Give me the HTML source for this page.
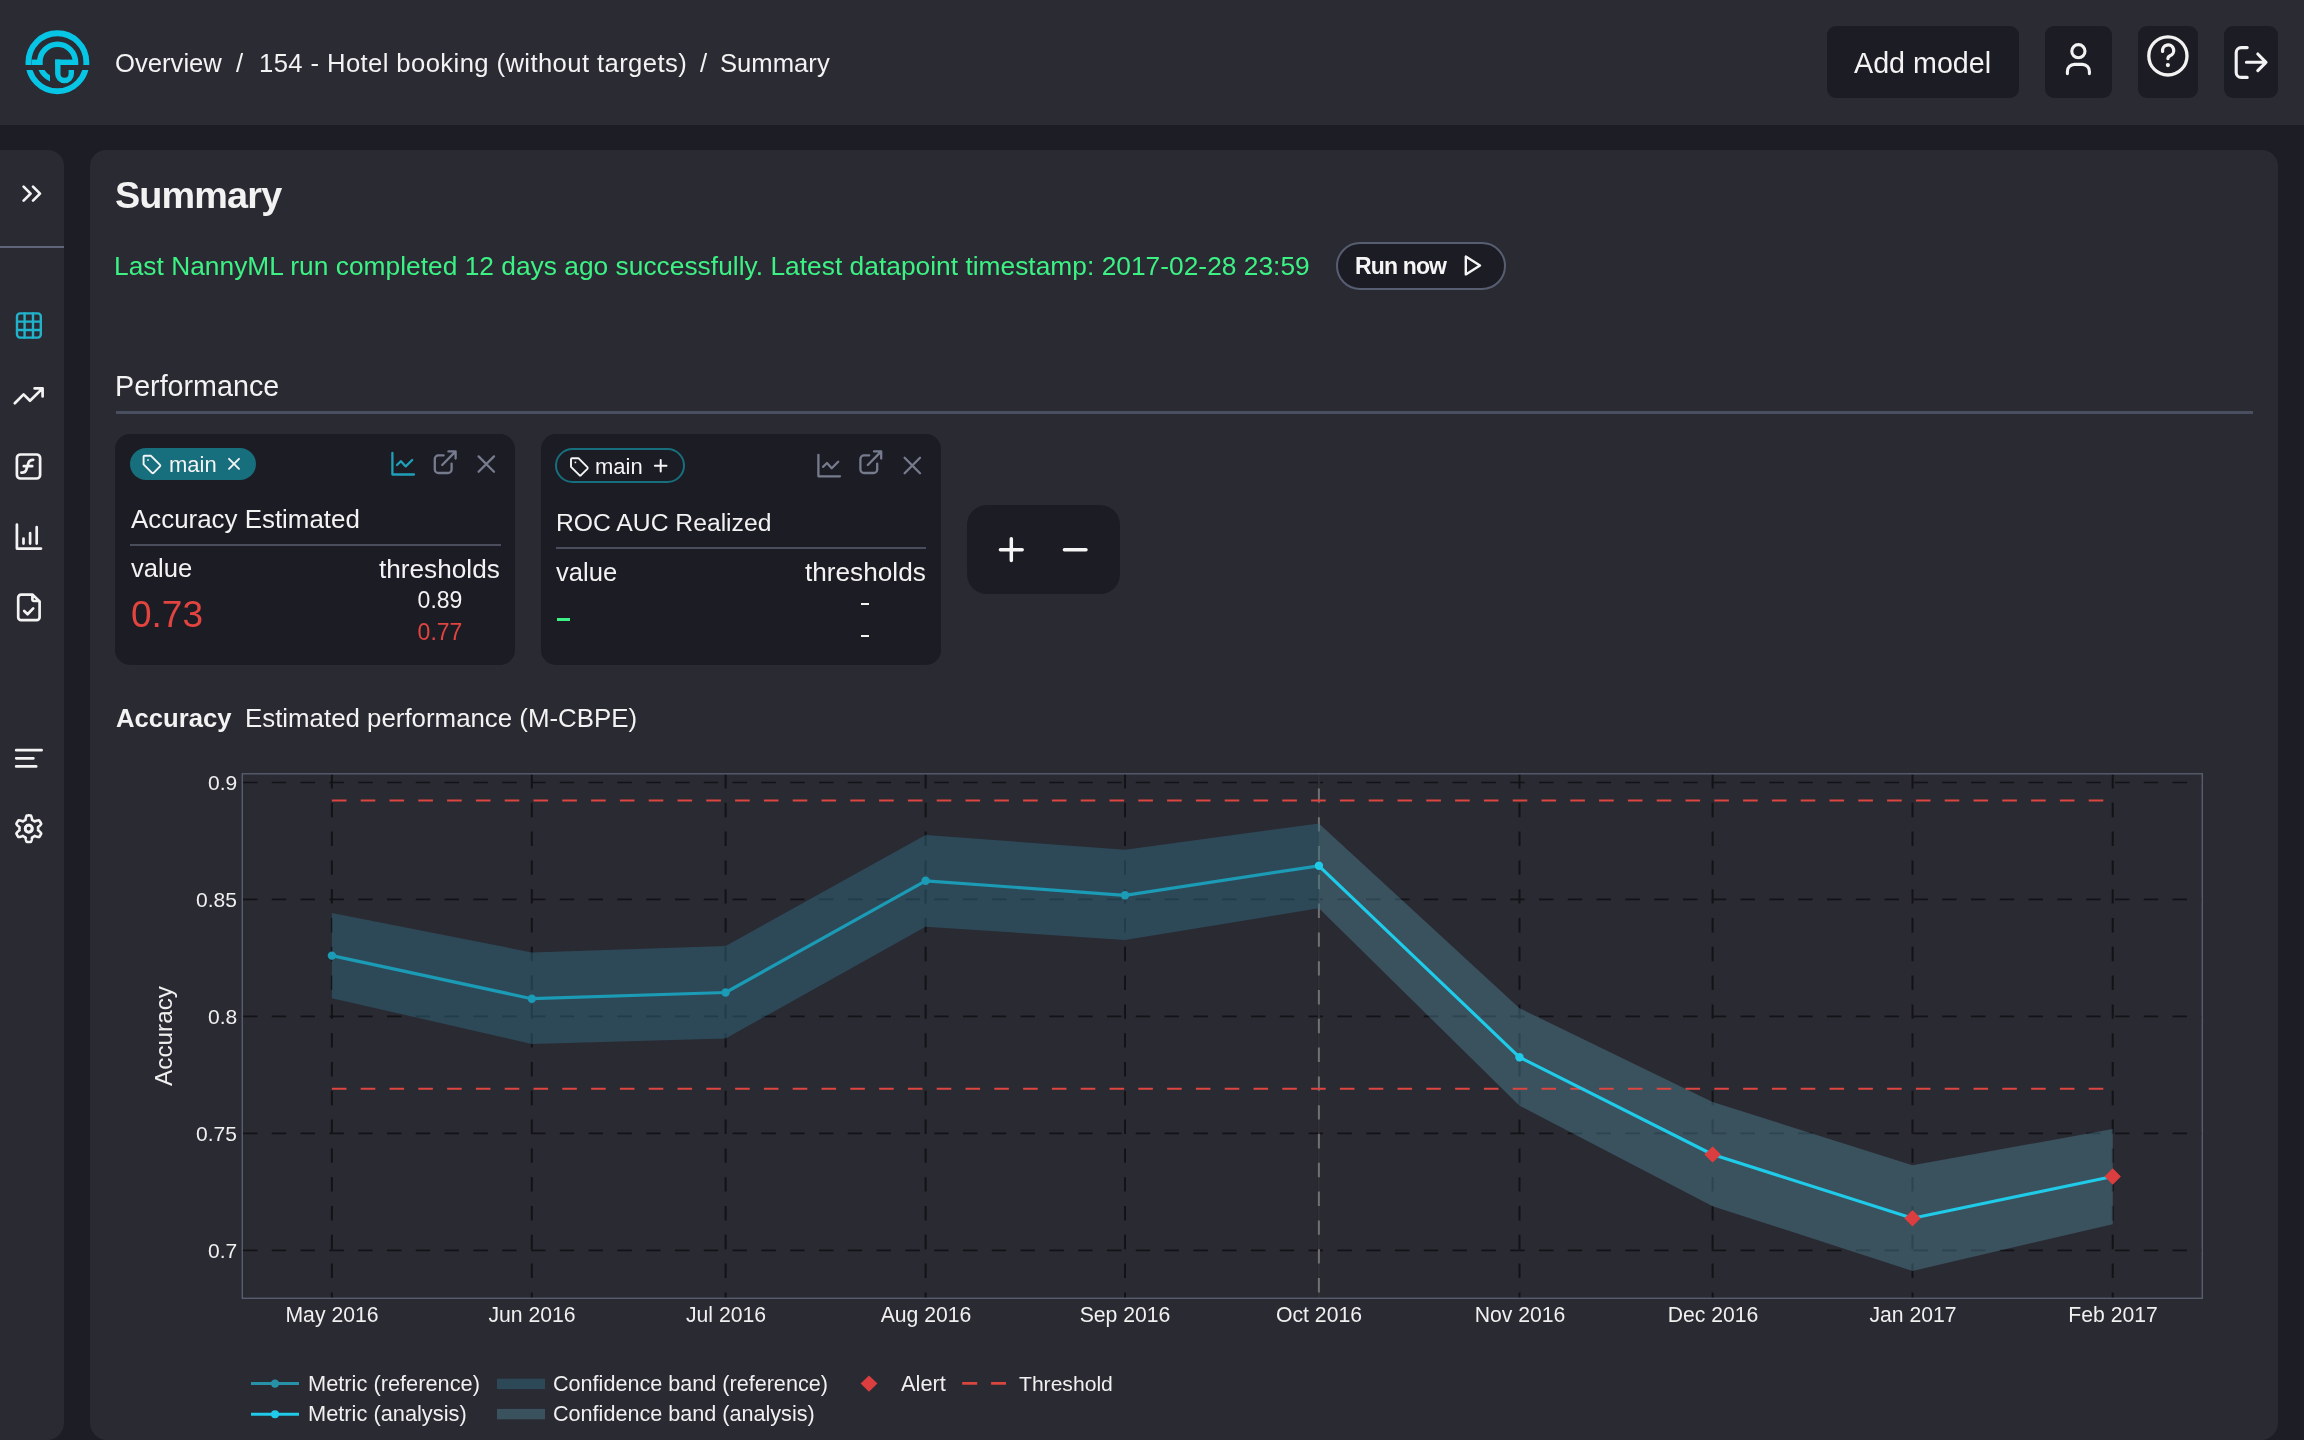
<!DOCTYPE html>
<html><head><meta charset="utf-8"><style>
html,body{margin:0;padding:0;}
body{width:2304px;height:1440px;overflow:hidden;position:relative;background:#1d1d26;font-family:"Liberation Sans", sans-serif;}
.t{position:absolute;white-space:nowrap;line-height:1;will-change:transform;}
svg{overflow:visible;}
</style></head><body>
<div style="position:absolute;left:0px;top:0px;width:2304px;height:125px;background:#2b2b34;border-radius:0;"></div>
<div style="position:absolute;left:0px;top:150px;width:64px;height:1290px;background:#2a2a33;border-radius:0 16px 17px 0;"></div>
<div style="position:absolute;left:90px;top:150px;width:2188px;height:1290px;background:#2a2a33;border-radius:16px 16px 17px 17px;"></div>
<svg style="position:absolute;left:0;top:0" width="130" height="125" viewBox="0 0 130 125">
<defs><clipPath id="lt"><rect x="0" y="0" width="130" height="65"/></clipPath><clipPath id="lb"><rect x="0" y="70" width="130" height="60"/></clipPath><clipPath id="ld"><rect x="30" y="70" width="20.1" height="25"/></clipPath></defs>
<g fill="none" stroke="#07c5e5" stroke-width="5.9">
<circle cx="57.4" cy="62.25" r="28.95" clip-path="url(#lt)"/>
<circle cx="57.4" cy="62.25" r="28.95" clip-path="url(#lb)"/>
<path d="M39.75 65 V62.1 A17.85 17.85 0 0 1 75.45 62.1 V65" stroke-width="5.5" />
<circle cx="57.6" cy="62.2" r="17.85" stroke-width="5.5" clip-path="url(#ld)"/>
</g>
<g fill="#07c5e5">
<rect x="31.6" y="59.6" width="10.8" height="5.4"/>
<rect x="55.1" y="59.6" width="23" height="5.4"/>
<path d="M55.1 59.6 H60.5 V73.7 A4.05 4.05 0 0 0 68.6 73.7 V70 H74 V73.7 A9.45 9.45 0 0 1 55.1 73.7 Z"/>

</g>
</svg>
<div class="t" style="left:115.20px;top:51.28px;font-size:25.65px;color:#f3f3f3;font-weight:400;">Overview</div>
<div class="t" style="left:235.50px;top:51.28px;font-size:25.65px;color:#f3f3f3;font-weight:400;">/</div>
<div class="t" style="left:258.60px;top:51.28px;font-size:25.65px;color:#f3f3f3;font-weight:400;letter-spacing:0.4px;">154 - Hotel booking (without targets)</div>
<div class="t" style="left:699.50px;top:51.28px;font-size:25.65px;color:#f3f3f3;font-weight:400;">/</div>
<div class="t" style="left:719.50px;top:51.28px;font-size:25.65px;color:#f3f3f3;font-weight:400;">Summary</div>
<div style="position:absolute;left:1827px;top:26px;width:192px;height:72px;background:#1c1c24;border-radius:9px;"></div>
<div class="t" style="left:1854.40px;top:48.60px;font-size:28.7px;color:#f3f3f3;font-weight:400;">Add model</div>
<div style="position:absolute;left:2045px;top:26px;width:67px;height:72px;background:#1c1c24;border-radius:9px;"></div>
<div style="position:absolute;left:2138px;top:26px;width:60px;height:72px;background:#1c1c24;border-radius:9px;"></div>
<div style="position:absolute;left:2224px;top:26px;width:54px;height:72px;background:#1c1c24;border-radius:9px;"></div>
<svg style="position:absolute;left:2030px;top:20px" width="260" height="90" viewBox="2030 20 260 90" fill="none" stroke="#f3f3f3" stroke-width="3.1" stroke-linecap="round" stroke-linejoin="round">
<circle cx="2078.4" cy="51.2" r="6.6"/>
<path d="M2067.4 73.6 V71.4 A7 7 0 0 1 2074.4 64.4 H2082.4 A7 7 0 0 1 2089.4 71.4 V73.6"/>
<circle cx="2167.9" cy="55.9" r="19.1" stroke-width="3.3"/>
<path d="M2162.6 51.4 A5.6 5.6 0 1 1 2170 55.8 Q2167.9 56.9 2167.9 58.6" stroke-width="3.3"/>
<circle cx="2167.9" cy="65.1" r="2.1" fill="#f3f3f3" stroke="none"/>
<path d="M2247.2 47.6 H2241.2 A5 5 0 0 0 2236.2 52.6 V72.4 A5 5 0 0 0 2241.2 77.4 H2247.2"/>
<path d="M2246.4 62.3 H2266 M2257.8 54 L2266 62.3 L2257.8 70.6"/>
</svg>
<div style="position:absolute;left:0px;top:246px;width:64px;height:2px;background:#5f6478;border-radius:0;"></div>
<svg style="position:absolute;left:0;top:150px" width="64" height="720" viewBox="0 150 64 720" fill="none" stroke="#f3f3f3" stroke-width="2.7" stroke-linecap="round" stroke-linejoin="round">
<path d="M23.6 186.6 L30.6 193.6 L23.6 200.6 M33 186.6 L40 193.6 L33 200.6"/>
<g stroke="#22b3cc">
<rect x="17" y="313.4" width="23.8" height="24.2" rx="3" stroke-width="2.4"/>
<path d="M17 321.6 H40.8 M17 330 H40.8 M24.6 313.4 V337.6 M33 313.4 V337.6" stroke-width="2.4"/>
</g>
<path d="M14.8 403.2 L23.6 394.4 L30 400.8 L42.6 388.4 M34.6 388.4 H42.6 V396.4"/>
<rect x="16.9" y="454.5" width="23.2" height="24" rx="3.6"/>
<path d="M21.4 472.6 Q25 473 26.2 470 L28.6 462.4 Q29.6 459.6 33.2 459.8 M23.8 466.2 H32.2"/>
<path d="M16.9 524.6 V548.6 H41 M23.5 543.6 V538.6 M30.1 543.6 V533 M36.7 543.6 V527.2"/>
<path d="M32.4 594.6 V599.6 A1.4 1.4 0 0 0 33.8 601 H39.2 M32.6 594.6 H21.2 A3 3 0 0 0 18.2 597.6 V617.2 A3 3 0 0 0 21.2 620.2 H36.6 A3 3 0 0 0 39.6 617.2 V601.4 Z M24.2 611 L27.6 614.2 L33.2 608.4"/>
<path d="M16.2 750.2 H41.6 M16.2 758.3 H33.4 M16.2 766.4 H36.2"/>
<g transform="translate(28.6 828.6)">
<circle r="3.4"/>
<path d="M-2.6 -12.4 A2.9 2.9 0 0 1 2.6 -12.4 L3.2 -9.6 Q4.6 -9 5.6 -8.2 L8.4 -9.2 A2.9 2.9 0 0 1 11 -4.6 L8.8 -2.8 Q9 -1.4 8.8 0 L8.8 0" opacity="0"/>
</g>
</svg>
<svg style="position:absolute;left:0;top:800px" width="64" height="60" viewBox="0 800 64 60" fill="none" stroke="#f3f3f3" stroke-width="2.6" stroke-linejoin="round">
<path d="M38.10 828.70 L38.10 828.86 L38.09 829.02 L38.09 829.19 L38.08 829.35 L38.06 829.51 L38.05 829.67 L38.03 829.83 L38.01 829.99 L37.99 830.16 L38.25 830.37 L38.53 830.59 L38.83 830.83 L39.12 831.08 L39.42 831.35 L39.71 831.62 L40.00 831.91 L40.28 832.21 L40.55 832.52 L40.79 832.83 L41.02 833.15 L41.22 833.47 L41.13 833.68 L41.04 833.90 L40.95 834.11 L40.85 834.32 L40.75 834.53 L40.65 834.74 L40.54 834.94 L40.43 835.15 L40.32 835.35 L40.20 835.55 L40.08 835.75 L39.95 835.94 L39.83 836.14 L39.69 836.33 L39.56 836.52 L39.42 836.70 L39.28 836.89 L39.13 837.07 L38.76 837.06 L38.37 837.02 L37.98 836.96 L37.58 836.89 L37.18 836.80 L36.79 836.69 L36.40 836.57 L36.02 836.45 L35.66 836.32 L35.31 836.18 L34.97 836.05 L34.65 835.93 L34.53 836.03 L34.40 836.13 L34.27 836.22 L34.13 836.32 L34.00 836.41 L33.87 836.50 L33.73 836.59 L33.59 836.67 L33.45 836.75 L33.31 836.83 L33.17 836.91 L33.02 836.99 L32.88 837.06 L32.73 837.13 L32.58 837.20 L32.43 837.26 L32.28 837.32 L32.13 837.38 L32.08 837.72 L32.03 838.08 L31.97 838.45 L31.90 838.83 L31.82 839.22 L31.72 839.61 L31.62 840.01 L31.50 840.40 L31.37 840.78 L31.22 841.15 L31.06 841.50 L30.88 841.83 L30.65 841.87 L30.42 841.90 L30.19 841.93 L29.96 841.95 L29.73 841.97 L29.50 841.98 L29.26 841.99 L29.03 842.00 L28.80 842.00 L28.57 842.00 L28.34 841.99 L28.10 841.98 L27.87 841.97 L27.64 841.95 L27.41 841.93 L27.18 841.90 L26.95 841.87 L26.72 841.83 L26.54 841.50 L26.38 841.15 L26.23 840.78 L26.10 840.40 L25.98 840.01 L25.88 839.61 L25.78 839.22 L25.70 838.83 L25.63 838.45 L25.57 838.08 L25.52 837.72 L25.47 837.38 L25.32 837.32 L25.17 837.26 L25.02 837.20 L24.87 837.13 L24.72 837.06 L24.58 836.99 L24.43 836.91 L24.29 836.83 L24.15 836.75 L24.01 836.67 L23.87 836.59 L23.73 836.50 L23.60 836.41 L23.47 836.32 L23.33 836.22 L23.20 836.13 L23.07 836.03 L22.95 835.93 L22.63 836.05 L22.29 836.18 L21.94 836.32 L21.58 836.45 L21.20 836.57 L20.81 836.69 L20.42 836.80 L20.02 836.89 L19.62 836.96 L19.23 837.02 L18.84 837.06 L18.47 837.07 L18.32 836.89 L18.18 836.70 L18.04 836.52 L17.91 836.33 L17.77 836.14 L17.65 835.94 L17.52 835.75 L17.40 835.55 L17.28 835.35 L17.17 835.15 L17.06 834.94 L16.95 834.74 L16.85 834.53 L16.75 834.32 L16.65 834.11 L16.56 833.90 L16.47 833.68 L16.38 833.47 L16.58 833.15 L16.81 832.83 L17.05 832.52 L17.32 832.21 L17.60 831.91 L17.89 831.62 L18.18 831.35 L18.48 831.08 L18.77 830.83 L19.07 830.59 L19.35 830.37 L19.61 830.16 L19.59 829.99 L19.57 829.83 L19.55 829.67 L19.54 829.51 L19.52 829.35 L19.51 829.19 L19.51 829.02 L19.50 828.86 L19.50 828.70 L19.50 828.54 L19.51 828.38 L19.51 828.21 L19.52 828.05 L19.54 827.89 L19.55 827.73 L19.57 827.57 L19.59 827.41 L19.61 827.24 L19.35 827.03 L19.07 826.81 L18.77 826.57 L18.48 826.32 L18.18 826.05 L17.89 825.78 L17.60 825.49 L17.32 825.19 L17.05 824.88 L16.81 824.57 L16.58 824.25 L16.38 823.93 L16.47 823.72 L16.56 823.50 L16.65 823.29 L16.75 823.08 L16.85 822.87 L16.95 822.66 L17.06 822.46 L17.17 822.25 L17.28 822.05 L17.40 821.85 L17.52 821.65 L17.65 821.46 L17.77 821.26 L17.91 821.07 L18.04 820.88 L18.18 820.70 L18.32 820.51 L18.47 820.33 L18.84 820.34 L19.23 820.38 L19.62 820.44 L20.02 820.51 L20.42 820.60 L20.81 820.71 L21.20 820.83 L21.58 820.95 L21.94 821.08 L22.29 821.22 L22.63 821.35 L22.95 821.47 L23.07 821.37 L23.20 821.27 L23.33 821.18 L23.47 821.08 L23.60 820.99 L23.73 820.90 L23.87 820.81 L24.01 820.73 L24.15 820.65 L24.29 820.57 L24.43 820.49 L24.58 820.41 L24.72 820.34 L24.87 820.27 L25.02 820.20 L25.17 820.14 L25.32 820.08 L25.47 820.02 L25.52 819.68 L25.57 819.32 L25.63 818.95 L25.70 818.57 L25.78 818.18 L25.88 817.79 L25.98 817.39 L26.10 817.00 L26.23 816.62 L26.38 816.25 L26.54 815.90 L26.72 815.57 L26.95 815.53 L27.18 815.50 L27.41 815.47 L27.64 815.45 L27.87 815.43 L28.10 815.42 L28.34 815.41 L28.57 815.40 L28.80 815.40 L29.03 815.40 L29.26 815.41 L29.50 815.42 L29.73 815.43 L29.96 815.45 L30.19 815.47 L30.42 815.50 L30.65 815.53 L30.88 815.57 L31.06 815.90 L31.22 816.25 L31.37 816.62 L31.50 817.00 L31.62 817.39 L31.72 817.79 L31.82 818.18 L31.90 818.57 L31.97 818.95 L32.03 819.32 L32.08 819.68 L32.13 820.02 L32.28 820.08 L32.43 820.14 L32.58 820.20 L32.73 820.27 L32.88 820.34 L33.02 820.41 L33.17 820.49 L33.31 820.57 L33.45 820.65 L33.59 820.73 L33.73 820.81 L33.87 820.90 L34.00 820.99 L34.13 821.08 L34.27 821.18 L34.40 821.27 L34.53 821.37 L34.65 821.47 L34.97 821.35 L35.31 821.22 L35.66 821.08 L36.02 820.95 L36.40 820.83 L36.79 820.71 L37.18 820.60 L37.58 820.51 L37.98 820.44 L38.37 820.38 L38.76 820.34 L39.13 820.33 L39.28 820.51 L39.42 820.70 L39.56 820.88 L39.69 821.07 L39.83 821.26 L39.95 821.46 L40.08 821.65 L40.20 821.85 L40.32 822.05 L40.43 822.25 L40.54 822.46 L40.65 822.66 L40.75 822.87 L40.85 823.08 L40.95 823.29 L41.04 823.50 L41.13 823.72 L41.22 823.93 L41.02 824.25 L40.79 824.57 L40.55 824.88 L40.28 825.19 L40.00 825.49 L39.71 825.78 L39.42 826.05 L39.12 826.32 L38.83 826.57 L38.53 826.81 L38.25 827.03 L37.99 827.24 L38.01 827.41 L38.03 827.57 L38.05 827.73 L38.06 827.89 L38.08 828.05 L38.09 828.21 L38.09 828.38 L38.10 828.54 Z"/>
<circle cx="28.8" cy="828.7" r="3.7"/>
</svg>
<div class="t" style="left:115.00px;top:177.19px;font-size:37.8px;color:#f2f2f2;font-weight:700;letter-spacing:-0.85px;">Summary</div>
<div class="t" style="left:114.40px;top:252.53px;font-size:26.3px;color:#3cf284;font-weight:400;letter-spacing:0.03px;">Last NannyML run completed 12 days ago successfully. Latest datapoint timestamp: 2017-02-28 23:59</div>
<div style="position:absolute;left:1336px;top:242px;width:170px;height:48px;background:#1c1c24;border-radius:24px;border:2px solid #575e71;box-sizing:border-box;"></div>
<div class="t" style="left:1355.00px;top:255.03px;font-size:23.0px;color:#f5f5f5;font-weight:700;letter-spacing:-0.85px;">Run now</div>
<svg style="position:absolute;left:1455px;top:248px" width="40" height="36" viewBox="1455 248 40 36" fill="none" stroke="#f5f5f5" stroke-width="2.4" stroke-linejoin="round">
<path d="M1465.8 256.6 V274.4 L1480 265.5 Z"/></svg>
<div class="t" style="left:115.00px;top:371.60px;font-size:28.7px;color:#f3f3f3;font-weight:400;">Performance</div>
<div style="position:absolute;left:116px;top:411px;width:2137px;height:3px;background:#4a4f5f;border-radius:0;"></div>
<div style="position:absolute;left:115px;top:434px;width:400px;height:231px;background:#1c1c24;border-radius:15px;"></div>
<div style="position:absolute;left:541px;top:434px;width:400px;height:231px;background:#1c1c24;border-radius:15px;"></div>
<div style="position:absolute;left:967px;top:505px;width:153px;height:89px;background:#1c1c24;border-radius:20px;"></div>
<div style="position:absolute;left:129.6px;top:448px;width:126.0px;height:32px;background:#176f7d;border-radius:16px;"></div>
<div class="t" style="left:168.80px;top:453.67px;font-size:22.0px;color:#f5f5f5;font-weight:400;">main</div>
<div class="t" style="left:130.60px;top:507.27px;font-size:25.9px;color:#f3f3f3;font-weight:400;">Accuracy Estimated</div>
<div style="position:absolute;left:130px;top:544px;width:371px;height:2px;background:#4a4e5c;border-radius:0;"></div>
<div class="t" style="left:130.60px;top:556.12px;font-size:25.6px;color:#f3f3f3;font-weight:400;">value</div>
<div class="t" style="right:1804.00px;top:555.62px;font-size:26.2px;color:#f3f3f3;font-weight:400;">thresholds</div>
<div class="t" style="left:130.60px;top:595.97px;font-size:37.0px;color:#e2443f;font-weight:400;">0.73</div>
<div class="t" style="left:-60.50px;width:1000px;text-align:center;top:588.73px;font-size:23.0px;color:#f3f3f3;font-weight:400;">0.89</div>
<div class="t" style="left:-60.50px;width:1000px;text-align:center;top:620.73px;font-size:23.0px;color:#e2443f;font-weight:400;">0.77</div>
<div style="position:absolute;left:555.3px;top:448px;width:129.70000000000005px;height:34.5px;background:transparent;border-radius:18px;border:2.4px solid #176f7d;box-sizing:border-box;"></div>
<div class="t" style="left:594.50px;top:455.87px;font-size:22.0px;color:#f5f5f5;font-weight:400;">main</div>
<div class="t" style="left:556.00px;top:510.69px;font-size:24.7px;color:#f3f3f3;font-weight:400;">ROC AUC Realized</div>
<div style="position:absolute;left:556px;top:547px;width:370px;height:2px;background:#4a4e5c;border-radius:0;"></div>
<div class="t" style="left:556.00px;top:559.52px;font-size:25.6px;color:#f3f3f3;font-weight:400;">value</div>
<div class="t" style="right:1378.20px;top:559.02px;font-size:26.2px;color:#f3f3f3;font-weight:400;">thresholds</div>
<div style="position:absolute;left:557.3px;top:618px;width:12.5px;height:3px;background:#3cf284;border-radius:0;"></div>
<div style="position:absolute;left:861px;top:603.4px;width:8px;height:2.0px;background:#f3f3f3;border-radius:0;"></div>
<div style="position:absolute;left:861px;top:635px;width:8px;height:2px;background:#f3f3f3;border-radius:0;"></div>
<svg style="position:absolute;left:120px;top:440px" width="1000" height="180" viewBox="120 440 1000 180" fill="none" stroke-linecap="round" stroke-linejoin="round">
<g stroke="#f5f5f5" stroke-width="2">
<path d="M143.6 456.8 A1 1 0 0 1 144.6 455.8 H151 L160 464.8 A1.2 1.2 0 0 1 160 466.4 L153.6 472.8 A1.2 1.2 0 0 1 152 472.8 L143.6 464.4 Z" stroke-width="1.9"/>
<rect x="147.2" y="459.2" width="1.6" height="1.6" fill="#f5f5f5" stroke="none"/>
<path d="M229 458.8 L239 468.8 M239 458.8 L229 468.8" stroke-width="1.9"/>
<path d="M571 459.2 A1 1 0 0 1 572 458.2 H578.4 L587.4 467.2 A1.2 1.2 0 0 1 587.4 468.8 L581 475.2 A1.2 1.2 0 0 1 579.4 475.2 L571 466.8 Z" stroke-width="1.9"/>
<rect x="574.6" y="461.6" width="1.6" height="1.6" fill="#f5f5f5" stroke="none"/>
<path d="M660.7 459.9 V471.5 M654.9 465.7 H666.5" stroke-width="2"/>
</g>
<g stroke="#1f9fb8" stroke-width="2.3">
<path d="M392.4 453 V474.5 H414 M397 465 L401 461.2 L405.7 466.4 L412.2 460"/>
</g>
<g stroke="#767b8e" stroke-width="2.3">
<path d="M443.6 455.4 H438.4 A3.6 3.6 0 0 0 434.8 459 V469.4 A3.6 3.6 0 0 0 438.4 473 H448 A3.6 3.6 0 0 0 451.6 469.4 V463.6 M442.2 465 L455.4 451.6 M448.4 451.4 H455.6 V458.6"/>
<path d="M478.6 456.4 L494 471.8 M494 456.4 L478.6 471.8"/>
<path transform="translate(426 1.8)" d="M392.4 453 V474.5 H414 M397 465 L401 461.2 L405.7 466.4 L412.2 460"/>
<path transform="translate(425.6 0)" d="M443.6 455.4 H438.4 A3.6 3.6 0 0 0 434.8 459 V469.4 A3.6 3.6 0 0 0 438.4 473 H448 A3.6 3.6 0 0 0 451.6 469.4 V463.6 M442.2 465 L455.4 451.6 M448.4 451.4 H455.6 V458.6"/>
<path transform="translate(426 1.4)" d="M478.6 456.4 L494 471.8 M494 456.4 L478.6 471.8"/>
</g>
<g stroke="#f5f5f5" stroke-width="3.5" stroke-linecap="round">
<path d="M1000.4 549.7 H1022.2 M1011.3 538.8 V560.6 M1064.4 549.7 H1086"/>
</g>
</svg>
<div class="t" style="left:115.80px;top:706.28px;font-size:25.65px;color:#f3f3f3;font-weight:700;">Accuracy</div>
<div class="t" style="left:245.00px;top:706.11px;font-size:25.85px;color:#f3f3f3;font-weight:400;">Estimated performance (M-CBPE)</div>
<svg style="position:absolute;left:0;top:0" width="2304" height="1440" viewBox="0 0 2304 1440">
<line x1="242" y1="782.50" x2="2202" y2="782.50" stroke="#121217" stroke-width="1.7" stroke-dasharray="14.4 14.4" stroke-dashoffset="-1"/>
<line x1="242" y1="899.45" x2="2202" y2="899.45" stroke="#121217" stroke-width="1.7" stroke-dasharray="14.4 14.4" stroke-dashoffset="-1"/>
<line x1="242" y1="1016.40" x2="2202" y2="1016.40" stroke="#121217" stroke-width="1.7" stroke-dasharray="14.4 14.4" stroke-dashoffset="-1"/>
<line x1="242" y1="1133.35" x2="2202" y2="1133.35" stroke="#121217" stroke-width="1.7" stroke-dasharray="14.4 14.4" stroke-dashoffset="-1"/>
<line x1="242" y1="1250.30" x2="2202" y2="1250.30" stroke="#121217" stroke-width="1.7" stroke-dasharray="14.4 14.4" stroke-dashoffset="-1"/>
<line x1="331.9" y1="773" x2="331.9" y2="1298" stroke="#121217" stroke-width="2" stroke-dasharray="14.4 14.4" stroke-dashoffset="-1"/>
<line x1="531.8" y1="773" x2="531.8" y2="1298" stroke="#121217" stroke-width="2" stroke-dasharray="14.4 14.4" stroke-dashoffset="-1"/>
<line x1="725.6" y1="773" x2="725.6" y2="1298" stroke="#121217" stroke-width="2" stroke-dasharray="14.4 14.4" stroke-dashoffset="-1"/>
<line x1="925.6" y1="773" x2="925.6" y2="1298" stroke="#121217" stroke-width="2" stroke-dasharray="14.4 14.4" stroke-dashoffset="-1"/>
<line x1="1125.0" y1="773" x2="1125.0" y2="1298" stroke="#121217" stroke-width="2" stroke-dasharray="14.4 14.4" stroke-dashoffset="-1"/>
<line x1="1318.9" y1="773" x2="1318.9" y2="1298" stroke="#121217" stroke-width="2" stroke-dasharray="14.4 14.4" stroke-dashoffset="-1"/>
<line x1="1519.5" y1="773" x2="1519.5" y2="1298" stroke="#121217" stroke-width="2" stroke-dasharray="14.4 14.4" stroke-dashoffset="-1"/>
<line x1="1712.6" y1="773" x2="1712.6" y2="1298" stroke="#121217" stroke-width="2" stroke-dasharray="14.4 14.4" stroke-dashoffset="-1"/>
<line x1="1912.5" y1="773" x2="1912.5" y2="1298" stroke="#121217" stroke-width="2" stroke-dasharray="14.4 14.4" stroke-dashoffset="-1"/>
<line x1="2112.7" y1="773" x2="2112.7" y2="1298" stroke="#121217" stroke-width="2" stroke-dasharray="14.4 14.4" stroke-dashoffset="-1"/>
<line x1="1318.9" y1="774" x2="1318.9" y2="1298" stroke="#333336" stroke-width="2"/>
<line x1="1318.9" y1="773" x2="1318.9" y2="1298" stroke="#717171" stroke-width="2" stroke-dasharray="14.4 14.4" stroke-dashoffset="-15.4"/>
<path d="M331.9 912.9 L531.8 952.4 L725.6 946.0 L925.6 835.0 L1125.0 849.7 L1318.9 823.5 L1318.9 908.3 L1125.0 940.0 L925.6 926.7 L725.6 1038.5 L531.8 1043.9 L331.9 998.2 Z" fill="rgba(48,104,124,0.5)"/>
<path d="M1318.9 823.5 L1519.5 1008.2 L1712.6 1102.0 L1912.5 1165.3 L2112.7 1129.0 L2112.7 1224.2 L1912.5 1270.9 L1712.6 1206.2 L1519.5 1105.7 L1318.9 908.3 Z" fill="rgba(74,120,138,0.5)"/>
<line x1="331.9" y1="800.6" x2="2112.7" y2="800.6" stroke="#dc4540" stroke-width="2.0" stroke-dasharray="14.6 14.2"/>
<line x1="331.9" y1="1088.8" x2="2112.7" y2="1088.8" stroke="#dc4540" stroke-width="2.0" stroke-dasharray="14.6 14.2"/>
<path d="M331.9 955.6 L531.8 998.7 L725.6 992.5 L925.6 880.8 L1125.0 895.3 L1318.9 865.8" fill="none" stroke="#1b9bb5" stroke-width="3.2" stroke-linejoin="round"/>
<path d="M1318.9 865.8 L1519.5 1057.3 L1712.6 1154.5 L1912.5 1218.3 L2112.7 1176.5" fill="none" stroke="#1fcbe8" stroke-width="3.2" stroke-linejoin="round"/>
<circle cx="331.9" cy="955.6" r="4.2" fill="#1b9bb5"/>
<circle cx="531.8" cy="998.7" r="4.2" fill="#1b9bb5"/>
<circle cx="725.6" cy="992.5" r="4.2" fill="#1b9bb5"/>
<circle cx="925.6" cy="880.8" r="4.2" fill="#1b9bb5"/>
<circle cx="1125.0" cy="895.3" r="4.2" fill="#1b9bb5"/>
<circle cx="1318.9" cy="865.8" r="4.2" fill="#1fcbe8"/>
<circle cx="1519.5" cy="1057.3" r="4.2" fill="#1fcbe8"/>
<path d="M1712.6 1146.3 L1720.8 1154.5 L1712.6 1162.7 L1704.3999999999999 1154.5 Z" fill="#dc3d3f"/>
<path d="M1912.5 1210.1 L1920.7 1218.3 L1912.5 1226.5 L1904.3 1218.3 Z" fill="#dc3d3f"/>
<path d="M2112.7 1168.3 L2120.8999999999996 1176.5 L2112.7 1184.7 L2104.5 1176.5 Z" fill="#dc3d3f"/>
<rect x="242.3" y="773.8" width="1960" height="524.5" fill="none" stroke="#575d6d" stroke-width="1.4"/>
<line x1="251" y1="1383.6" x2="299" y2="1383.6" stroke="#2792a7" stroke-width="3"/><circle cx="275" cy="1383.6" r="4.2" fill="#2792a7"/>
<line x1="251" y1="1414.2" x2="299" y2="1414.2" stroke="#1fcbe8" stroke-width="3"/><circle cx="275" cy="1414.2" r="4" fill="#1fcbe8"/>
<rect x="497" y="1378.7" width="48" height="10.4" fill="rgba(48,104,124,0.5)"/>
<rect x="497" y="1408.9" width="48" height="10.4" fill="rgba(74,120,138,0.5)"/>
<path d="M869 1375.4 L877.4 1383.6 L869 1391.8 L860.6 1383.6 Z" fill="#dc3d3f"/>
<path d="M962.2 1383.4 H977.2 M991.1 1383.4 H1006" stroke="#d9453f" stroke-width="2.6"/>
</svg>
<div class="t" style="right:2067.20px;top:771.92px;font-size:21.0px;color:#f0f0f0;font-weight:400;">0.9</div>
<div class="t" style="right:2067.20px;top:888.87px;font-size:21.0px;color:#f0f0f0;font-weight:400;">0.85</div>
<div class="t" style="right:2067.20px;top:1005.82px;font-size:21.0px;color:#f0f0f0;font-weight:400;">0.8</div>
<div class="t" style="right:2067.20px;top:1122.77px;font-size:21.0px;color:#f0f0f0;font-weight:400;">0.75</div>
<div class="t" style="right:2067.20px;top:1239.72px;font-size:21.0px;color:#f0f0f0;font-weight:400;">0.7</div>
<div class="t" style="left:-168.10px;width:1000px;text-align:center;top:1304.25px;font-size:21.2px;color:#f0f0f0;font-weight:400;">May 2016</div>
<div class="t" style="left:31.80px;width:1000px;text-align:center;top:1304.25px;font-size:21.2px;color:#f0f0f0;font-weight:400;">Jun 2016</div>
<div class="t" style="left:225.60px;width:1000px;text-align:center;top:1304.25px;font-size:21.2px;color:#f0f0f0;font-weight:400;">Jul 2016</div>
<div class="t" style="left:425.60px;width:1000px;text-align:center;top:1304.25px;font-size:21.2px;color:#f0f0f0;font-weight:400;">Aug 2016</div>
<div class="t" style="left:625.00px;width:1000px;text-align:center;top:1304.25px;font-size:21.2px;color:#f0f0f0;font-weight:400;">Sep 2016</div>
<div class="t" style="left:818.90px;width:1000px;text-align:center;top:1304.25px;font-size:21.2px;color:#f0f0f0;font-weight:400;">Oct 2016</div>
<div class="t" style="left:1019.50px;width:1000px;text-align:center;top:1304.25px;font-size:21.2px;color:#f0f0f0;font-weight:400;">Nov 2016</div>
<div class="t" style="left:1212.60px;width:1000px;text-align:center;top:1304.25px;font-size:21.2px;color:#f0f0f0;font-weight:400;">Dec 2016</div>
<div class="t" style="left:1412.50px;width:1000px;text-align:center;top:1304.25px;font-size:21.2px;color:#f0f0f0;font-weight:400;">Jan 2017</div>
<div class="t" style="left:1612.70px;width:1000px;text-align:center;top:1304.25px;font-size:21.2px;color:#f0f0f0;font-weight:400;">Feb 2017</div>
<div class="t" style="left:64px;top:1021px;width:200px;height:30px;line-height:30px;text-align:center;font-size:24.3px;color:#f0f0f0;transform:rotate(-90deg);">Accuracy</div>
<div class="t" style="left:308.20px;top:1372.84px;font-size:21.8px;color:#f0f0f0;font-weight:400;">Metric (reference)</div>
<div class="t" style="left:308.20px;top:1403.04px;font-size:21.8px;color:#f0f0f0;font-weight:400;">Metric (analysis)</div>
<div class="t" style="left:553.10px;top:1373.01px;font-size:21.6px;color:#f0f0f0;font-weight:400;">Confidence band (reference)</div>
<div class="t" style="left:553.10px;top:1403.21px;font-size:21.6px;color:#f0f0f0;font-weight:400;">Confidence band (analysis)</div>
<div class="t" style="left:901.30px;top:1372.84px;font-size:21.8px;color:#f0f0f0;font-weight:400;">Alert</div>
<div class="t" style="left:1018.50px;top:1373.43px;font-size:21.1px;color:#f0f0f0;font-weight:400;">Threshold</div>
</body></html>
